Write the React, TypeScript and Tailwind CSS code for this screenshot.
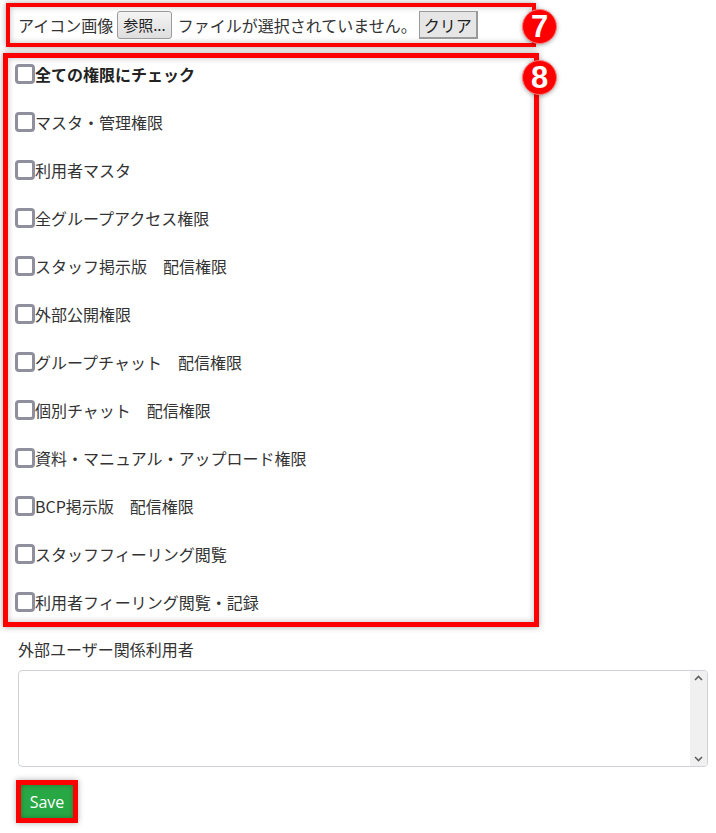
import React from 'react';

const perms = [
  'マスタ・管理権限',
  '利用者マスタ',
  '全グループアクセス権限',
  'スタッフ掲示版　配信権限',
  '外部公開権限',
  'グループチャット　配信権限',
  '個別チャット　配信権限',
  '資料・マニュアル・アップロード権限',
  'BCP掲示版　配信権限',
  'スタッフフィーリング閲覧',
  '利用者フィーリング閲覧・記録',
];

const Badge: React.FC<{ n: number; className: string }> = ({ n, className }) => (
  <div
    className={`absolute w-[35px] h-[35px] rounded-full bg-[#ff0000] border border-[#ff7a7a] flex items-center justify-center text-white font-bold text-[31px] leading-none shadow-[0_1px_4px_rgba(0,0,0,0.35)] font-['Liberation_Sans',sans-serif] ${className}`}
  >
    {n}
  </div>
);

const Check: React.FC<{ label: string; bold?: boolean }> = ({ label, bold }) => (
  <label className="flex items-center h-6">
    <span className="w-5 h-5 border-[3px] border-[#8f8f9d] rounded-[4px] bg-white shrink-0" />
    <span className={`text-[16px] leading-6 ${bold ? 'font-bold text-[#222]' : 'text-[#333]'}`}>{label}</span>
  </label>
);

const App: React.FC = () => {
  return (
    <div className="relative w-[716px] h-[833px] bg-white overflow-hidden font-['Noto_Sans_CJK_JP',sans-serif] text-[#333]">
      {/* 7 */}
      <div className="ml-[6px] mt-[3px] w-[530px] h-[44px] border-4 border-[#ff0000] shadow-[0_0_6px_rgba(0,0,0,0.35),inset_0_0_6px_rgba(0,0,0,0.25)] flex items-center pl-2 text-[16px]">
        <span>アイコン画像</span>
        <button className="ml-1 h-[28px] px-[5px] border border-[#9a9a9a] rounded-[3px] bg-gradient-to-b from-[#f4f4f4] to-[#dedede] text-[15px] text-[#222]">
          参照...
        </button>
        <span className="ml-[6px]">ファイルが選択されていません。</span>
        <button className="ml-[2px] h-[28px] px-[4px] border border-[#9a9a9a] border-b-2 border-r-2 bg-[#e6e6e6] text-[16px] text-[#222]">
          クリア
        </button>
      </div>

      {/* 8 */}
      <div className="ml-[3px] mt-[6px] w-[536px] border-[5px] border-[#ff0000] shadow-[0_0_6px_rgba(0,0,0,0.35),inset_0_0_6px_rgba(0,0,0,0.25)] pt-1 pb-2 pl-[7px] flex flex-col gap-6">
        <Check label="全ての権限にチェック" bold />
        {perms.map((p) => (
          <Check key={p} label={p} />
        ))}
      </div>

      <div className="ml-[18px] mt-[10px] text-[16px] leading-6">外部ユーザー関係利用者</div>

      <div className="ml-[18px] mt-[9px] w-[690px] h-[97px] border border-[#cfd2d6] rounded-[4px] flex overflow-hidden">
        <textarea className="flex-1 resize-none outline-none" />
        <div className="w-[17px] bg-[#f0f0f0] flex flex-col items-center justify-between py-[4px] text-[#606060]">
          <svg width="9" height="6" viewBox="0 0 9 6"><path d="M1 5 L4.5 1.5 L8 5" stroke="currentColor" strokeWidth="1.6" fill="none" /></svg>
          <svg width="9" height="6" viewBox="0 0 9 6"><path d="M1 1 L4.5 4.5 L8 1" stroke="currentColor" strokeWidth="1.6" fill="none" /></svg>
        </div>
      </div>

      <div className="ml-[16px] mt-[13px] w-[62px] h-[43px] border-[5px] border-[#ff0000] shadow-[0_0_6px_rgba(0,0,0,0.3)]">
        <button className="w-full h-full bg-[#28a745] text-white text-[16px] font-['Open_Sans',sans-serif] shadow-[inset_0_0_4px_rgba(0,0,0,0.3)]">
          Save
        </button>
      </div>

      <Badge n={7} className="left-[522px] top-[9px]" />
      <Badge n={8} className="left-[522px] top-[60px]" />
    </div>
  );
};

export default App;
